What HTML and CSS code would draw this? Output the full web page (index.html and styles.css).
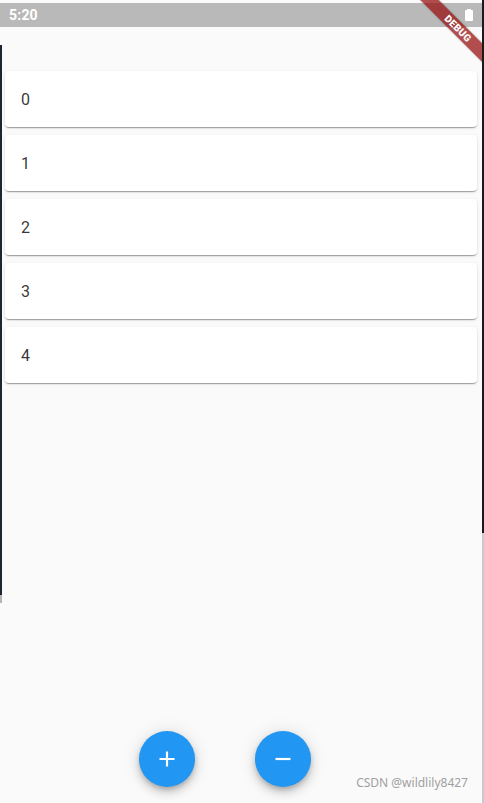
FILE: index.html
```html
<!DOCTYPE html>
<html>
<head>
<meta charset="utf-8">
<link rel="stylesheet" href="styles.css">
</head>
<body>
<div class="frame">
  <div class="screen">
    <div class="top-gap"></div>
    <div class="status-bar">
      <span class="time">5:20</span>
      <span class="battery"><span class="nub"></span><span class="cell"></span></span>
    </div>
    <div class="list">
      <div class="card">0</div>
      <div class="card">1</div>
      <div class="card">2</div>
      <div class="card">3</div>
      <div class="card">4</div>
    </div>
    <div class="fab-row">
      <button class="fab" aria-label="add">
        <svg width="18" height="18" viewBox="0 0 18 18"><path d="M9 1.5v15M1.5 9h15" stroke="#fff" stroke-width="2.2" fill="none"/></svg>
      </button>
      <button class="fab" aria-label="remove">
        <svg width="18" height="18" viewBox="0 0 18 18"><path d="M1.5 9h15" stroke="#fff" stroke-width="2.2" fill="none"/></svg>
      </button>
    </div>
    <div class="debug-banner"><span>DEBUG</span></div>
    <div class="left-strip"></div>
    <div class="watermark">CSDN @wildlily8427</div>
  </div>
  <div class="right-edge"></div>
</div>
</body>
</html>
```
FILE: styles.css
```css
html, body {
  margin: 0;
  padding: 0;
  background: #fafafa;
  font-family: Roboto, "Noto Sans", sans-serif;
}
.frame {
  display: flex;
  width: 484px;
  height: 803px;
  overflow: hidden;
}
.screen {
  position: relative;
  width: 482px;
  height: 803px;
  display: flex;
  flex-direction: column;
  background: #fafafa;
  overflow: hidden;
}
.right-edge {
  width: 2px;
  height: 803px;
  background: linear-gradient(#1a1a1a 0, #1a1a1a 533px, #c9c9c9 533px, #c9c9c9 100%);
}
.top-gap {
  height: 3px;
  background: #fafafa;
}
.status-bar {
  height: 24px;
  background: #b9b9b9;
  display: flex;
  align-items: center;
  justify-content: space-between;
  padding: 0 9px 0 9px;
}
.time {
  color: #fff;
  font-weight: 700;
  font-size: 14px;
  letter-spacing: 0.2px;
}
.battery {
  display: flex;
  flex-direction: column;
  align-items: center;
}
.battery .nub {
  width: 4px;
  height: 1.5px;
  background: #fff;
}
.battery .cell {
  width: 8px;
  height: 11px;
  background: #fff;
  border-radius: 1px;
}
.list {
  flex: 1;
  display: flex;
  flex-direction: column;
  gap: 8px;
  padding: 44px 5px 0 5px;
}
.card {
  height: 56px;
  background: #fff;
  border-radius: 4px;
  box-shadow: 0 2px 1px -1px rgba(0,0,0,0.2), 0 1px 1px 0 rgba(0,0,0,0.14), 0 1px 3px 0 rgba(0,0,0,0.12);
  display: flex;
  align-items: center;
  padding-left: 16px;
  font-size: 16px;
  color: rgba(0,0,0,0.8);
}
.fab-row {
  display: flex;
  gap: 60px;
  padding: 0 0 16px 139px;
}
.fab {
  width: 56px;
  height: 56px;
  border-radius: 50%;
  border: none;
  padding: 0;
  background: #2196f3;
  display: flex;
  align-items: center;
  justify-content: center;
  box-shadow: 0 3px 5px -1px rgba(0,0,0,0.2), 0 6px 10px 0 rgba(0,0,0,0.14), 0 1px 18px 0 rgba(0,0,0,0.12);
}
.debug-banner {
  position: absolute;
  top: 21.5px;
  right: -36px;
  width: 120px;
  height: 13px;
  transform: rotate(45deg);
  background: rgba(150, 10, 10, 0.72);
  box-shadow: 0 0 2px rgba(0,0,0,0.3);
  display: flex;
  align-items: center;
  justify-content: center;
}
.debug-banner span {
  color: #fff;
  font-weight: 900;
  font-size: 10px;
  letter-spacing: 0.3px;
  line-height: 1;
}
.left-strip {
  position: absolute;
  left: 0;
  top: 45px;
  width: 2px;
  height: 558px;
  background: linear-gradient(#1f2633 0, #1f2633 550px, #b5b5b5 550px, #b5b5b5 100%);
}
.watermark {
  position: absolute;
  right: 14px;
  bottom: 12px;
  font-family: "Noto Sans", sans-serif;
  font-size: 12px;
  color: #a0a0a0;
}
```
